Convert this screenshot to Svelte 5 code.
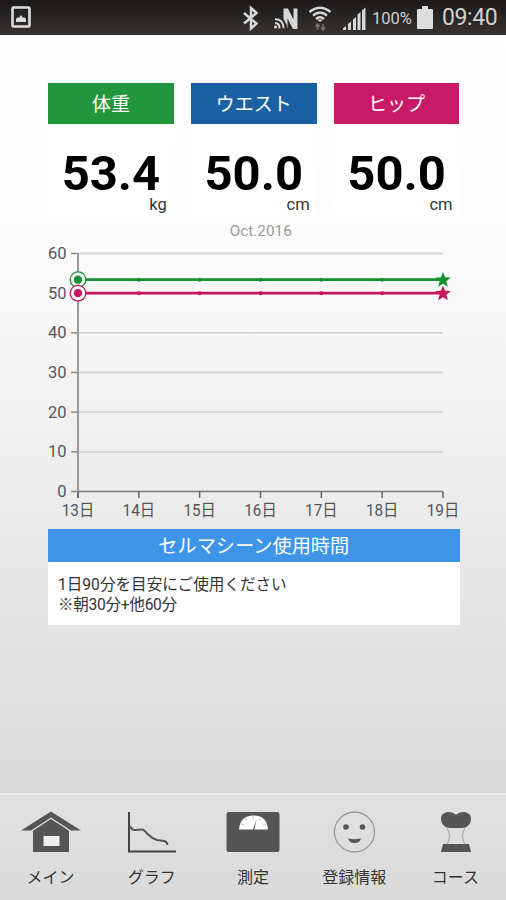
<script lang="ts">
  const cards = [
    { label: '体重', value: '53.4', unit: 'kg', kind: 'weight' },
    { label: 'ウエスト', value: '50.0', unit: 'cm', kind: 'waist' },
    { label: 'ヒップ', value: '50.0', unit: 'cm', kind: 'hip' },
  ];

  const days = [13, 14, 15, 16, 17, 18, 19];
  const levels = [0, 10, 20, 30, 40, 50, 60];
  const series = [
    { value: 53.4, color: '#14922f' },
    { value: 50, color: '#c4175e' },
  ];

  const left = 30;
  const right = 395;
  const xAt = (i: number) => left + i * ((right - left) / 6);
  const yAt = (v: number) => 248.5 - v * 3.967;

  function star(cx: number, cy: number) {
    const points = [];
    for (let i = 0; i < 10; i++) {
      const r = i % 2 ? 3.5 : 8.2;
      const a = (Math.PI / 5) * i - Math.PI / 2;
      points.push(`${cx + r * Math.cos(a)},${cy + r * Math.sin(a)}`);
    }
    return points.join(' ');
  }

  const tabs = [
    { id: 'home', label: 'メイン' },
    { id: 'graph', label: 'グラフ' },
    { id: 'scale', label: '測定' },
    { id: 'face', label: '登録情報' },
    { id: 'course', label: 'コース' },
  ];
</script>

<div class="screen">
  <header class="status">
    <svg class="picture" width="20" height="22" viewBox="0 0 20 22">
      <rect x="1.5" y="1.5" width="17" height="19" rx="1" fill="none" stroke="#ddd" stroke-width="2.600" />
      <path d="M5 16v-3l2-2 1 1 2-3 2 3 1-1 2 2v3z" fill="#ddd" />
    </svg>
    <svg width="131" height="30" viewBox="0 0 131 30" fill="none" stroke="#d6d6d6">
      <path d="M4 11 16.500 21.500l-5.500 5V6l5.500 5L4 21.500" stroke-width="2.500" />
      <path d="M43.500 17V6.500h4.500l5.500 11v-11h4V27H53l-5.500-10.500V27q-1-6-4-10z" fill="#d6d6d6" stroke="none" />
      <circle cx="35.500" cy="25" r="1.600" fill="#d6d6d6" stroke="none" />
      <path d="M35 21q4.500 0 4.500 5.500M35 17.300q8.500 0 8.500 9" stroke-width="1.900" />
      <path d="M69.500 10q10.500-8.500 21 0M73 13.500q7-6 14 0M76 17q4-3.400 8 0" stroke-width="2.400" />
      <path d="m80 20-3-2.500h6z" fill="#d6d6d6" stroke="none" />
      <path d="M77.500 28v-6m-2 2.500 2-2.500 2 2.500M83 22v6m-2-2.500 2 2.500 2-2.500" stroke="#777" stroke-width="1.500" />
      <path d="M103 28v-1.500l3-2.500v4zM108 28v-6l3-2.500V28zM113 28V17.500l3-2.500v13zM117.500 28V12.500l3-2.500v18zM122 28V8.500l3.500-3V28z" fill="#d6d6d6" stroke="none" />
    </svg>
    <span class="percent">100%</span>
    <svg class="battery" width="16" height="23" viewBox="0 0 16 23">
      <path d="M5 0h6v3h4q1 0 1 1v18q0 1-1 1H1q-1 0-1-1V4q0-1 1-1h4z" fill="#ddd" />
    </svg>
    <span class="clock">09:40</span>
  </header>

  <main>
    <section class="cards">
      {#each cards as card}
        <div class="card">
          <h2 class={card.kind}>{card.label}</h2>
          <div class="value">{card.value}</div>
          <div class="unit">{card.unit}</div>
        </div>
      {/each}
    </section>

    <h3 class="month">Oct.2016</h3>

    <svg class="chart" width="413" height="286" viewBox="0 0 413 286">
      {#each levels as level}
        {#if level > 0}
          <line x1={left} x2={right} y1={yAt(level)} y2={yAt(level)} stroke="#d4d4d4" stroke-width="1.8" />
        {/if}
        <line x1="23" x2={left} y1={yAt(level)} y2={yAt(level)} stroke="#888" stroke-width="1.5" />
        <text x="18.500" y={yAt(level) + 5.500} text-anchor="end">{level}</text>
      {/each}
      <line x1={left} x2={left} y1={yAt(60)} y2="255" stroke="#999" stroke-width="2" />
      <line x1={left} x2={right} y1={yAt(0)} y2={yAt(0)} stroke="#777" stroke-width="1.5" />
      {#each days as day, i}
        <line x1={xAt(i)} x2={xAt(i)} y1={yAt(0)} y2="255" stroke="#666" stroke-width="1.5" />
        <text x={xAt(i)} y="273" text-anchor="middle" textLength="32.5" lengthAdjust="spacingAndGlyphs">{day}日</text>
      {/each}
      {#each series as s}
        <line x1={left} x2={right} y1={yAt(s.value)} y2={yAt(s.value)} stroke={s.color} stroke-width="2.6" />
        {#each days.slice(1, -1) as _, i}
          <circle cx={xAt(i + 1)} cy={yAt(s.value)} r="2" fill={s.color} />
        {/each}
        <circle cx={left} cy={yAt(s.value)} r="7.800" fill="#fff" stroke={s.color} stroke-width="1.300" />
        <circle cx={left} cy={yAt(s.value)} r="4.200" fill={s.color} />
        <polygon points={star(right, yAt(s.value) + 0.5)} fill={s.color} />
      {/each}
    </svg>

    <section class="usage">
      <h2>セルマシーン使用時間</h2>
      <p>1日90分を目安にご使用ください</p>
      <p class="note">※朝30分+他60分</p>
    </section>
  </main>

  <nav>
    {#each tabs as tab}
      <div class="tab">
        <svg width="60" height="42" viewBox="0 0 60 42">
          {#if tab.id === 'home'}
            <path d="M0 19.500 30 .5l30 19H50L30 6.500 10 19.500z" fill="#555" />
            <path d="M12 19.700 30 8l18 11.700V41H12z" fill="#555" />
            <rect x="22.500" y="25" width="16" height="10" fill="#eee" />
          {:else if tab.id === 'graph'}
            <path d="M7 1v39.500h47" fill="none" stroke="#444" stroke-width="2" />
            <path d="M8 15q2 4.500 5 4t7-.5q2 0 5 4 5 5 10 6.500l7 1q3 .5 3.500 4" fill="none" stroke="#555" stroke-width="2" />
          {:else if tab.id === 'scale'}
            <rect x="3.500" y="1" width="53" height="40" rx="2.500" fill="#555" />
            <path d="M16 18.500Q17 4.500 30.500 4.500T45 18.500H31.500l2-10-3.500 10z" fill="#fff" />
            <path d="m18 13 3 1m1-7 2 3m6-5v3m8-1-2 3m7 3-3 1" stroke="#bbb" stroke-width=".8" />
          {:else if tab.id === 'face'}
            <circle cx="30.500" cy="21" r="20" fill="none" stroke="#999" stroke-width="1.300" />
            <circle cx="22" cy="16" r="2.800" fill="#555" />
            <circle cx="38.500" cy="16" r="2.800" fill="#555" />
            <path d="M24 27.500q6.500 1.500 13 0-1.500 4.500-6.500 4.500t-6.500-4.500z" fill="#555" />
          {:else}
            <path d="M31 4C35-.5 46-.5 46 8c0 6-5 9-9 9H25c-4 0-9-3-9-9 0-8.500 11-8.500 15-4z" fill="#555" />
            <path d="M22 17q5 8 0 16m18-16q-5 8 0 16" fill="none" stroke="#aaa" stroke-width="1.200" />
            <path d="M18 33h26l2 8H16z" fill="#555" />
          {/if}
        </svg>
        <span>{tab.label}</span>
      </div>
    {/each}
  </nav>
</div>

<style>
  :global(body) {
    margin: 0;
  }

  .screen {
    display: flex;
    flex-direction: column;
    width: 506px;
    height: 900px;
    overflow: hidden;
    font-family: Roboto, 'Noto Sans CJK JP', sans-serif;
    color: #333;
    background: linear-gradient(#fff 0, #fdfdfd 220px, #f0f0f0 440px, #d9d9d9 800px);
  }

  h2,
  h3,
  p {
    margin: 0;
    font-weight: 400;
  }

  .status {
    display: flex;
    align-items: center;
    box-sizing: border-box;
    height: 35px;
    padding: 0 9px 1px 11px;
    color: #d0d0d0;
    background: linear-gradient(#1b1918, #363331);
  }

  .picture {
    margin-right: auto;
  }

  .percent {
    width: 41px;
    margin: 2px 4px 0 1px;
    font-size: 16.5px;
  }

  .battery {
    margin-right: 9px;
  }

  .clock {
    width: 55px;
    font-size: 23px;
    letter-spacing: -0.4px;
  }

  main {
    flex: 1;
    padding: 48px 46.5px 0 48px;
  }

  .cards {
    display: flex;
    gap: 17px;
  }

  .card {
    flex: 1;
    height: 132px;
    background: #fff;
  }

  .card h2 {
    height: 41px;
    font-size: 19px;
    line-height: 43px;
    text-align: center;
    color: #fff;
  }

  .weight {
    background: #22963c;
  }

  .waist {
    background: #1961a2;
  }

  .hip {
    background: #c81a66;
  }

  .value {
    margin-top: 28px;
    font-size: 49px;
    font-weight: 700;
    line-height: 43px;
    text-align: center;
    color: #000;
  }

  .unit {
    padding-right: 7px;
    font-size: 16.5px;
    line-height: 19px;
    text-align: right;
  }

  .month {
    margin-top: 7px;
    padding-left: 14px;
    font-size: 15.3px;
    line-height: 18px;
    text-align: center;
    color: #999;
  }

  .chart {
    display: block;
    margin-top: 3px;
    overflow: visible;
  }

  .chart text {
    font-size: 16.5px;
    fill: #555;
  }

  .usage {
    height: 96px;
    background: #fff;
  }

  .usage h2 {
    height: 33px;
    margin-bottom: 13px;
    font-size: 19.2px;
    line-height: 36px;
    text-align: center;
    color: #fff;
    background: #3d94e8;
  }

  .usage p {
    padding-left: 10px;
    font-size: 15.6px;
    line-height: 20px;
    white-space: nowrap;
  }

  .usage .note {
    letter-spacing: -0.3px;
  }

  nav {
    display: flex;
    box-sizing: border-box;
    height: 107px;
    border-top: 2px solid #ebebeb;
    background: linear-gradient(#e1e1e1, #dadada);
  }

  .tab {
    display: flex;
    flex: 1;
    flex-direction: column;
    align-items: center;
    padding-top: 16px;
    font-size: 16px;
  }

  .tab span {
    margin-top: 12px;
    line-height: 25px;
    white-space: nowrap;
  }
</style>
